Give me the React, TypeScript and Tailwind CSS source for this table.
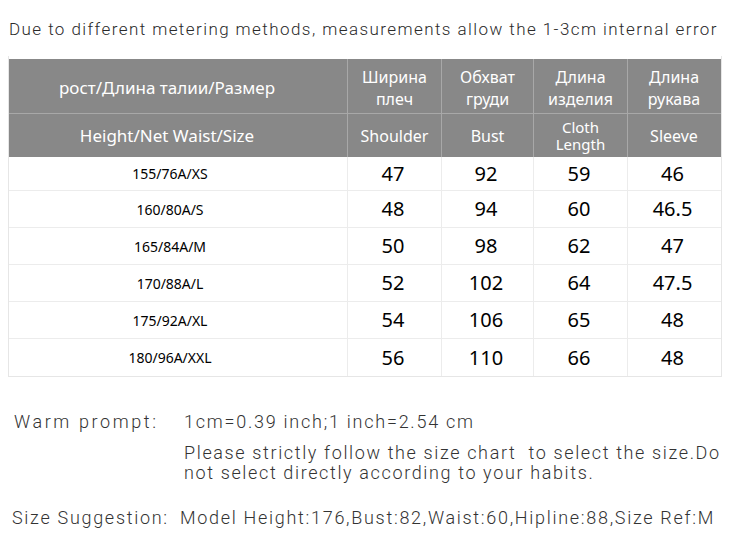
import React from 'react';

const rows = [
  ['155/76A/XS', '47', '92', '59', '46'],
  ['160/80A/S', '48', '94', '60', '46.5'],
  ['165/84A/M', '50', '98', '62', '47'],
  ['170/88A/L', '52', '102', '64', '47.5'],
  ['175/92A/XL', '54', '106', '65', '48'],
  ['180/96A/XXL', '56', '110', '66', '48'],
];

const cols = 'grid grid-cols-[338px_94px_92px_94px_93px]';

export default function App() {
  return (
    <div className="w-[730px] h-[548px] bg-white relative overflow-hidden font-['Roboto',sans-serif] text-[#222]">
      {/* Top note */}
      <div className="pl-[9px] pt-[18px] h-[56px] text-[17px] leading-[22px] tracking-[1.43px] font-light text-[#2a2a2a] whitespace-nowrap">
        Due to different metering methods, measurements allow the 1-3cm internal error
      </div>

      {/* Size table */}
      <div className="ml-[8px] w-[714px] border-x border-b border-[#e6e6e6] pt-[3px] font-['Noto_Sans',sans-serif]">
        <div className="bg-[#888888] text-white">
          <div className={`${cols} h-[55px] border-b border-[#a8a8a8]`}>
            <div className="flex items-center justify-center pr-[22px] pt-[3px] text-[17px]">рост/Длина талии/Размер</div>
            {['Ширина плеч', 'Обхват груди', 'Длина изделия', 'Длина рукава'].map((t, i) => (
              <div key={i} className="flex items-center justify-center text-center pt-[3px] text-[16px] leading-[22px] border-l border-[#a8a8a8] px-1">
                {t}
              </div>
            ))}
          </div>
          <div className={`${cols} h-[43px]`}>
            <div className="flex items-center justify-center pr-[22px] text-[17px]">Height/Net Waist/Size</div>
            <div className="flex items-center justify-center text-[16px] border-l border-[#a8a8a8]">Shoulder</div>
            <div className="flex items-center justify-center text-[16px] border-l border-[#a8a8a8]">Bust</div>
            <div className="flex flex-col items-center justify-center text-center text-[15px] leading-[17px] border-l border-[#a8a8a8]">
              <span>Cloth</span>
              <span>Length</span>
            </div>
            <div className="flex items-center justify-center text-[16px] border-l border-[#a8a8a8]">Sleeve</div>
          </div>
        </div>
        {rows.map((r, i) => (
          <div key={i} className={`${cols} ${i === 0 ? 'h-[34px]' : 'h-[37px]'} ${i < rows.length - 1 ? 'border-b border-[#ececec]' : ''} text-black`}>
            <div className="flex items-center justify-center pr-[16px] text-[14px]">{r[0]}</div>
            {r.slice(1).map((v, j) => (
              <div key={j} className="flex items-center justify-center pr-[3px] text-[20px] border-l border-[#ececec]">
                {v}
              </div>
            ))}
          </div>
        ))}
      </div>

      {/* Notes */}
      <div className="mt-[33px] flex text-[18px] font-light text-[#333]">
        <div className="w-[184px] pl-[14px] leading-[24px] tracking-[2.6px]">Warm prompt:</div>
        <div className="flex-1 whitespace-nowrap">
          <div className="leading-[24px] tracking-[1.75px]">1cm=0.39 inch;1 inch=2.54 cm</div>
          <div className="mt-[9px] leading-[20px] tracking-[1.63px]">
            Please strictly follow the size chart&nbsp; to select the size.Do
            <br />
            not select directly according to your habits.
          </div>
        </div>
      </div>
      <div className="mt-[23px] flex text-[18px] font-light text-[#333] whitespace-nowrap">
        <div className="w-[180px] pl-[12px] leading-[24px] tracking-[1.7px]">Size Suggestion:</div>
        <div className="leading-[24px] tracking-[1.7px]">Model Height:176,Bust:82,Waist:60,Hipline:88,Size Ref:M</div>
      </div>
    </div>
  );
}
